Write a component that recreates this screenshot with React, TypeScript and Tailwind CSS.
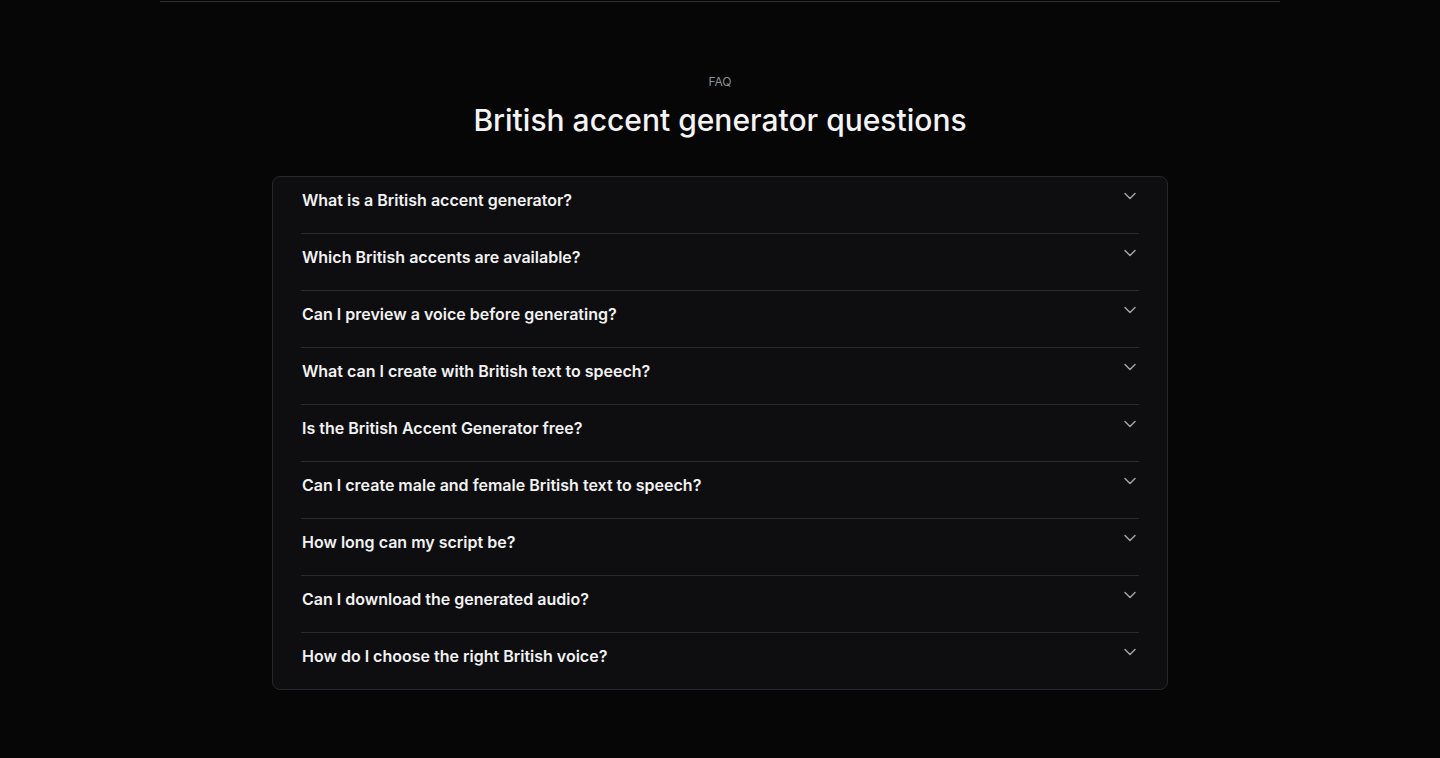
import React from "react";

const questions = [
  "What is a British accent generator?",
  "Which British accents are available?",
  "Can I preview a voice before generating?",
  "What can I create with British text to speech?",
  "Is the British Accent Generator free?",
  "Can I create male and female British text to speech?",
  "How long can my script be?",
  "Can I download the generated audio?",
  "How do I choose the right British voice?",
];

function Chevron() {
  return (
    <svg
      width="20"
      height="20"
      viewBox="0 0 24 24"
      fill="none"
      stroke="currentColor"
      strokeWidth="1.8"
      strokeLinecap="round"
      strokeLinejoin="round"
      className="shrink-0 text-[#a1a1a6]"
    >
      <path d="m6 9 6 6 6-6" />
    </svg>
  );
}

export default function App() {
  return (
    <div
      className="min-h-[758px] bg-[#060606] text-white"
      style={{ fontFamily: "Inter, 'Noto Sans', sans-serif" }}
    >
      <div className="pt-px">
        <div className="mx-auto max-w-[1120px] border-t border-[#2e2e30]" />
      </div>
      <section className="pt-[72px] pb-16">
        <p className="text-center text-xs leading-4 text-[#8e8e93]">FAQ</p>
        <h2 className="mt-3 text-center text-[30px] leading-9 font-medium text-[#f4f4f5]">
          British accent generator questions
        </h2>
        <div className="mx-auto mt-[38px] w-[896px] rounded-lg border border-[#28282c] bg-[#0e0e10] px-7">
          {questions.map((q, i) => (
            <div
              key={q}
              className={
                i < questions.length - 1 ? "border-b border-[#2a2a2e]" : ""
              }
            >
              <button className="flex w-full items-start justify-between gap-4 pt-[11px] pb-[21px] text-left">
                <span className="pl-px text-base leading-6 font-semibold text-[#f2f2f3]">
                  {q}
                </span>
                <span className="-mt-[2px] -mr-px">
                  <Chevron />
                </span>
              </button>
            </div>
          ))}
        </div>
      </section>
    </div>
  );
}
